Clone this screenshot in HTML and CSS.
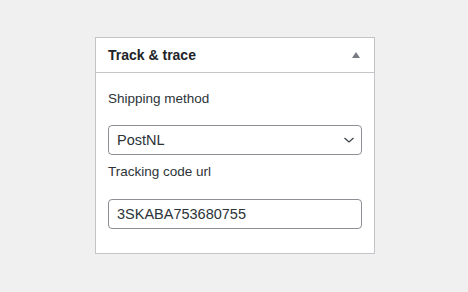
FILE: index.html
```html
<!DOCTYPE html>
<html lang="en">
<head>
    <meta charset="UTF-8">
    <title>Track &amp; trace</title>
    <link rel="stylesheet" href="styles.css">
</head>
<body>
    <div class="postbox">
        <div class="postbox-header">
            <h2>Track &amp; trace</h2>
            <span class="toggle"></span>
        </div>
        <div class="inside">
            <label for="shipping">Shipping method</label>
            <div class="select-wrap">
                <select id="shipping">
                    <option>PostNL</option>
                </select>
                <svg class="chevron" width="14" height="14" viewBox="0 0 14 14"><path d="M2.5 5 L7 9 L11.5 5" fill="none" stroke="#3c434a" stroke-width="1.3"/></svg>
            </div>
            <label for="tracking" class="second">Tracking code url</label>
            <input id="tracking" type="text" value="3SKABA753680755">
        </div>
    </div>
</body>
</html>
```

FILE: styles.css
```css
body {
    margin: 0;
    padding: 37px 0 0 95px;
    background: #f0f0f1;
    font-family: "Liberation Sans", Arial, sans-serif;
    font-size: 13.5px;
    color: #2c3338;
}

.postbox {
    width: 278px;
    height: 215px;
    background: white;
    border: 1px solid #c3c4c7;
}

.postbox-header {
    display: flex;
    align-items: center;
    justify-content: space-between;
    height: 34px;
    padding: 0 12px;
    border-bottom: 1px solid #c3c4c7;
}

.postbox-header h2 {
    margin: 0;
    font-size: 14px;
    font-weight: bold;
    color: #1d2327;
}

.toggle {
    width: 0;
    height: 0;
    margin-right: 2px;
    border-left: 4px solid transparent;
    border-right: 4px solid transparent;
    border-bottom: 6px solid #787c82;
}

.inside {
    padding: 17px 12px 0;
}

label {
    display: block;
    line-height: 18px;
    margin-bottom: 17px;
}

label.second {
    margin-bottom: 18px;
}

.select-wrap {
    position: relative;
    width: 254px;
    margin-bottom: 8px;
}

select {
    display: block;
    width: 254px;
    height: 30px;
    margin: 0;
    padding: 0 24px 0 8px;
    border: 1px solid #8c8f94;
    border-radius: 4px;
    background: white;
    font-family: inherit;
    font-size: 14.5px;
    color: #2c3338;
    appearance: none;
    -webkit-appearance: none;
}

.chevron {
    position: absolute;
    right: 6px;
    top: 8px;
}

input {
    display: block;
    box-sizing: border-box;
    width: 254px;
    height: 30px;
    margin: 0;
    padding: 0 8px;
    border: 1px solid #8c8f94;
    border-radius: 4px;
    font-family: inherit;
    font-size: 14.5px;
    color: #2c3338;
}
```
